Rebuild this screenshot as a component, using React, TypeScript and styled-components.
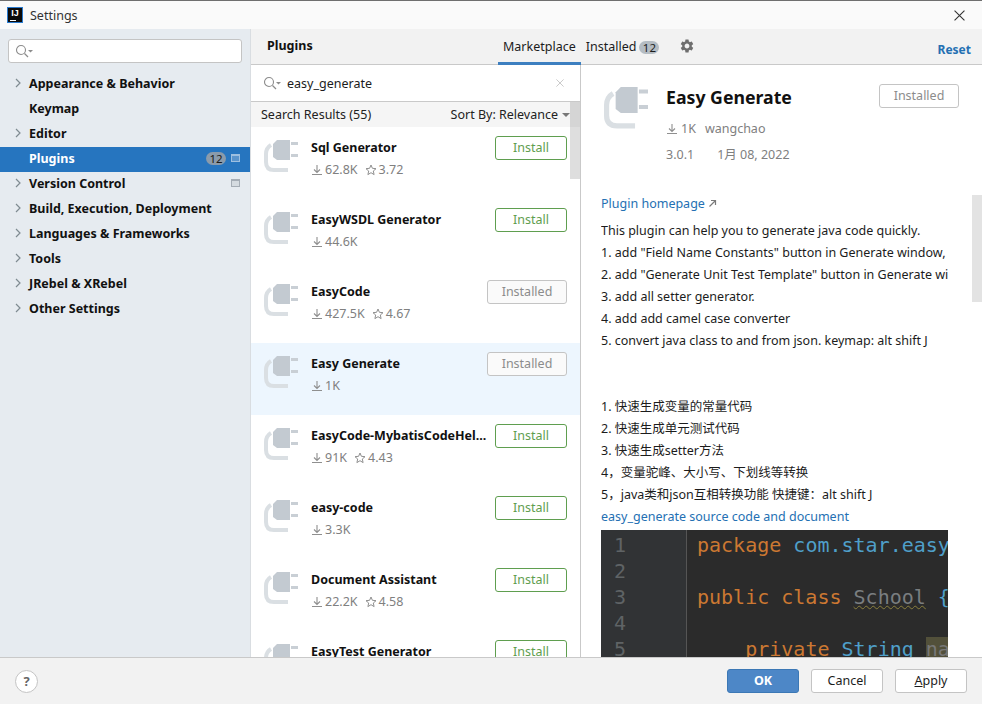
import React from "react";
import styled, { createGlobalStyle } from "styled-components";
import { MdSettings } from "react-icons/md";

const FONT = `"Noto Sans", "Noto Sans CJK SC", "Liberation Sans", sans-serif`;

const plugins = [
  { name: "Sql Generator", downloads: "62.8K", rating: "3.72", installed: false },
  { name: "EasyWSDL Generator", downloads: "44.6K", installed: false },
  { name: "EasyCode", downloads: "427.5K", rating: "4.67", installed: true },
  { name: "Easy Generate", downloads: "1K", installed: true, selected: true },
  { name: "EasyCode-MybatisCodeHel...", downloads: "91K", rating: "4.43", installed: false },
  { name: "easy-code", downloads: "3.3K", installed: false },
  { name: "Document Assistant", downloads: "22.2K", rating: "4.58", installed: false },
  { name: "EasyTest Generator", downloads: "", installed: false },
];

const tree = [
  { label: "Appearance & Behavior", arrow: true },
  { label: "Keymap" },
  { label: "Editor", arrow: true },
  { label: "Plugins", selected: true, badge: "12", square: true },
  { label: "Version Control", arrow: true, square: true },
  { label: "Build, Execution, Deployment", arrow: true },
  { label: "Languages & Frameworks", arrow: true },
  { label: "Tools", arrow: true },
  { label: "JRebel & XRebel", arrow: true },
  { label: "Other Settings", arrow: true },
];

function PlugIcon({ size = 34 }: { size?: number }) {
  return (
    <svg width={size} height={size} viewBox="0 0 34 34" fill="none">
      <path d="M7 5Q2 8 2 14V22Q2 30 10 30H24" stroke="#dadfe3" strokeWidth="4" />
      <path d="M13 0H26V20H13L9 17V4Z" fill="#c3cad1" />
      <path d="M27 2H34V5H27ZM27 14H34V17H27Z" fill="#c9cfd5" />
    </svg>
  );
}

function SearchIcon() {
  return (
    <svg width="19" height="14" viewBox="0 0 19 14" fill="none">
      <circle cx="6" cy="6" r="4.5" stroke="#8c8c8c" strokeWidth="1.1" />
      <path d="M9.5 9.5L13 13" stroke="#8c8c8c" strokeWidth="1.3" />
      <path d="M13 6H18L15.5 8.5Z" fill="#8c8c8c" />
    </svg>
  );
}

function DownloadIcon() {
  return (
    <svg width="12" height="12" viewBox="0 0 12 12" fill="none">
      <path d="M6 1V8M3 5.5L6 8.5L9 5.5M1 10.5H11" stroke="#8f8f8f" strokeWidth="1.1" />
    </svg>
  );
}

function StarIcon() {
  return (
    <svg width="12" height="12" viewBox="0 0 12 12" fill="none">
      <path d="M6 1L7.4 4.3L11 4.7L8.3 7L9.1 10.6L6 8.7L2.9 10.6L3.7 7L1 4.7L4.6 4.3Z" stroke="#8f8f8f" strokeWidth="1" />
    </svg>
  );
}

function Chevron() {
  return (
    <svg width="8" height="10" viewBox="0 0 8 10" fill="none">
      <path d="M2 1L6 5L2 9" stroke="#7f8b91" strokeWidth="1.2" />
    </svg>
  );
}

function CloseIcon({ color, size }: { color: string; size: number }) {
  return (
    <svg width={size} height={size} viewBox="0 0 10 10" fill="none">
      <path d="M0.5 0.5L9.5 9.5M9.5 0.5L0.5 9.5" stroke={color} strokeWidth="1" />
    </svg>
  );
}

export default function App() {
  return (
    <Window>
      <GlobalStyle />
      <TitleBar>
        <AppLogo>
          IJ
          <LogoDash />
        </AppLogo>
        <TitleText>Settings</TitleText>
        <TitleClose>
          <CloseIcon color="#333" size={11} />
        </TitleClose>
      </TitleBar>

      <Body>
        <Sidebar>
          <TreeSearch>
            <SearchIcon />
          </TreeSearch>
          {tree.map((item) => (
            <TreeRow key={item.label} selected={item.selected}>
              <ArrowSlot>{item.arrow && <Chevron />}</ArrowSlot>
              <TreeLabel>{item.label}</TreeLabel>
              {item.badge && <TreeBadge>{item.badge}</TreeBadge>}
              {item.square && <ProjectMark selected={item.selected} />}
            </TreeRow>
          ))}
        </Sidebar>

        <Main>
          <Header>
            <HeaderTitle>Plugins</HeaderTitle>
            <Tab active>Marketplace</Tab>
            <Tab>
              Installed<TabBadge>12</TabBadge>
            </Tab>
            <GearSlot>
              <MdSettings size={16} color="#6e6e6e" />
            </GearSlot>
            <ResetLink>Reset</ResetLink>
          </Header>

          <Columns>
            <ListColumn>
              <ListSearch>
                <SearchIcon />
                <ListSearchText>easy_generate</ListSearchText>
                <CloseIcon color="#bdbdbd" size={8} />
              </ListSearch>
              <ResultsBar>
                <span>Search Results (55)</span>
                <SortBy>
                  Sort By: Relevance
                  <SortCaret />
                </SortBy>
              </ResultsBar>
              <ListScroll>
                {plugins.map((p) => (
                  <PluginRow key={p.name} selected={p.selected}>
                    <PlugIcon />
                    <PluginInfo>
                      <PluginName>{p.name}</PluginName>
                      <PluginMeta>
                        <DownloadIcon />
                        <span>{p.downloads}</span>
                        {p.rating && (
                          <RatingGroup>
                            <StarIcon />
                            <span>{p.rating}</span>
                          </RatingGroup>
                        )}
                      </PluginMeta>
                    </PluginInfo>
                    <RowButton installed={p.installed}>{p.installed ? "Installed" : "Install"}</RowButton>
                  </PluginRow>
                ))}
              </ListScroll>
              <ListThumb />
            </ListColumn>

            <DetailColumn>
              <DetailHead>
                <PlugIcon size={44} />
                <DetailInfo>
                  <DetailTitle>Easy Generate</DetailTitle>
                  <DetailMeta top={14}>
                    <DownloadIcon />
                    <span>1K</span>
                    <Vendor>wangchao</Vendor>
                  </DetailMeta>
                  <DetailMeta top={10}>
                    <span>3.0.1</span>
                    <DateText>1月 08, 2022</DateText>
                  </DetailMeta>
                </DetailInfo>
                <InstalledButton>Installed</InstalledButton>
              </DetailHead>

              <Description>
                <HomepageLink>
                  Plugin homepage
                  <svg width="9" height="9" viewBox="0 0 9 9" fill="none">
                    <path d="M1.5 7.5L7.5 1.5M3 1.5H7.5V6" stroke="#7a7a7a" strokeWidth="1.2" />
                  </svg>
                </HomepageLink>
                <TextLine>This plugin can help you to generate java code quickly.</TextLine>
                <TextLine>1. add "Field Name Constants" button in Generate window, can generate</TextLine>
                <TextLine>2. add "Generate Unit Test Template" button in Generate window, can</TextLine>
                <TextLine>3. add all setter generator.</TextLine>
                <TextLine>4. add add camel case converter</TextLine>
                <TextLine>5. convert java class to and from json. keymap: alt shift J</TextLine>
                <Spacer />
                <TextLine>1. 快速生成变量的常量代码</TextLine>
                <TextLine>2. 快速生成单元测试代码</TextLine>
                <TextLine>3. 快速生成setter方法</TextLine>
                <TextLine>4，变量驼峰、大小写、下划线等转换</TextLine>
                <TextLine>5，java类和json互相转换功能 快捷键：alt shift J</TextLine>
                <SourceLink>easy_generate source code and document</SourceLink>
                <CodeShot>
                  <Gutter>
                    <span>1</span>
                    <span>2</span>
                    <span>3</span>
                    <span>4</span>
                    <span>5</span>
                  </Gutter>
                  <CodeLines>
                    <CodeLine>
                      <Keyword>package</Keyword> <Pack>com.star.easy</Pack>
                    </CodeLine>
                    <CodeLine>&nbsp;</CodeLine>
                    <CodeLine>
                      <Keyword>public class</Keyword> <Wavy>School</Wavy> <Pack>{"{"}</Pack>
                    </CodeLine>
                    <CodeLine>&nbsp;</CodeLine>
                    <CodeLine>
                      {"    "}
                      <Keyword>private</Keyword> <Pack>String</Pack> <Marked>na</Marked>
                    </CodeLine>
                  </CodeLines>
                </CodeShot>
              </Description>
              <DetailThumb />
            </DetailColumn>
          </Columns>
        </Main>
      </Body>

      <Footer>
        <HelpButton>?</HelpButton>
        <FooterButton primary>OK</FooterButton>
        <FooterButton>Cancel</FooterButton>
        <FooterButton>
          <u>A</u>pply
        </FooterButton>
      </Footer>
    </Window>
  );
}

const GlobalStyle = createGlobalStyle`
  html, body {
    margin: 0;
    padding: 0;
    overflow: hidden;
  }
  * {
    box-sizing: border-box;
  }
`;

const Window = styled.div`
  width: 982px;
  height: 704px;
  display: flex;
  flex-direction: column;
  background: #f2f2f2;
  border-top: 1px solid #6f6f6f;
  font-family: ${FONT};
  font-size: 12.5px;
  color: #1c1c1c;
  overflow: hidden;
`;

const TitleBar = styled.div`
  height: 28px;
  flex: none;
  display: flex;
  align-items: center;
  padding: 0 17px 0 8px;
  background: #fafafa;
`;

const AppLogo = styled.div`
  position: relative;
  width: 14px;
  height: 14px;
  background: #0b0b0b;
  outline: 1px solid #2a7bd0;
  color: #fff;
  font-family: "Liberation Sans", sans-serif;
  font-size: 9px;
  font-weight: 700;
  line-height: 10px;
  text-align: center;
`;

const LogoDash = styled.div`
  position: absolute;
  left: 2px;
  bottom: 1px;
  width: 6px;
  height: 1px;
  background: #fff;
`;

const TitleText = styled.div`
  margin-left: 8px;
  font-size: 12.5px;
  color: #333;
`;

const TitleClose = styled.div`
  margin-left: auto;
  display: flex;
`;

const Body = styled.div`
  flex: 1;
  min-height: 0;
  display: flex;
`;

const Sidebar = styled.div`
  width: 250px;
  flex: none;
  background: #e6ebf0;
  padding-top: 10px;
`;

const TreeSearch = styled.div`
  height: 24px;
  margin: 0 8px 9px;
  display: flex;
  align-items: center;
  padding-left: 6px;
  background: #fff;
  border: 1px solid #c4c4c4;
  border-radius: 3px;
`;

const TreeRow = styled.div<{ selected?: boolean }>`
  height: 25px;
  display: flex;
  align-items: center;
  padding: 0 10px 3px 0;
  color: ${(p) => (p.selected ? "#fff" : "#111")};
  background: ${(p) => (p.selected ? "#2675bf" : "transparent")};
`;

const ArrowSlot = styled.div`
  width: 29px;
  flex: none;
  display: flex;
  justify-content: flex-end;
  padding-right: 7px;
`;

const TreeLabel = styled.div`
  font-size: 12.5px;
  font-weight: 700;
  white-space: nowrap;
  flex: 1;
`;

const TreeBadge = styled.div`
  width: 20px;
  height: 13px;
  margin-right: 5px;
  border-radius: 7px;
  background: #8a9bab;
  color: #1a1a1a;
  font-size: 11.5px;
  line-height: 13px;
  text-align: center;
`;

const ProjectMark = styled.div<{ selected?: boolean }>`
  width: 9px;
  height: 8px;
  border: 1px solid ${(p) => (p.selected ? "#9dbfe0" : "#a5adb5")};
  border-top-width: 2px;
  background: ${(p) => (p.selected ? "#5a94cc" : "#d5dbe0")};
`;

const Main = styled.div`
  flex: 1;
  min-width: 0;
  display: flex;
  flex-direction: column;
  border-left: 1px solid #d9dde1;
`;

const Header = styled.div`
  height: 36px;
  flex: none;
  display: flex;
  align-items: stretch;
  padding-left: 16px;
  background: #f2f2f2;
  border-bottom: 1px solid #c9c9c9;
`;

const HeaderTitle = styled.div`
  width: 231px;
  flex: none;
  padding-top: 8px;
  font-size: 12.5px;
  font-weight: 700;
  color: #111;
`;

const Tab = styled.div<{ active?: boolean }>`
  display: flex;
  align-items: flex-start;
  padding: 10px 5px 0;
  font-size: 12.5px;
  line-height: 16px;
  color: #1c1c1c;
  margin-bottom: -1px;
  border-bottom: 3px solid ${(p) => (p.active ? "#3d7fc0" : "transparent")};
`;

const TabBadge = styled.span`
  width: 20px;
  height: 13px;
  margin: 2px 0 0 3px;
  border-radius: 7px;
  background: #b4bcc3;
  font-size: 11.5px;
  line-height: 13px;
  text-align: center;
`;

const GearSlot = styled.div`
  margin-left: 15px;
  padding-top: 9px;
`;

const ResetLink = styled.div`
  margin-left: auto;
  padding: 12px 11px 0 0;
  font-size: 12px;
  font-weight: 700;
  color: #2470b3;
`;

const Columns = styled.div`
  flex: 1;
  min-height: 0;
  display: flex;
`;

const ListColumn = styled.div`
  position: relative;
  width: 330px;
  flex: none;
  display: flex;
  flex-direction: column;
  background: #fff;
  border-right: 1px solid #c9c9c9;
  overflow: hidden;
`;

const ListSearch = styled.div`
  height: 37px;
  flex: none;
  display: flex;
  align-items: center;
  padding: 0 16px 0 12px;
  border-bottom: 1px solid #c9c9c9;
`;

const ListSearchText = styled.div`
  flex: 1;
  margin-left: 5px;
  font-size: 12.5px;
  color: #1c1c1c;
`;

const ResultsBar = styled.div`
  height: 25px;
  flex: none;
  display: flex;
  align-items: center;
  justify-content: space-between;
  padding: 0 10px 0 10px;
  background: #f5f5f5;
  font-size: 12.5px;
  color: #222;
`;

const SortBy = styled.div`
  display: flex;
  align-items: center;
`;

const SortCaret = styled.div`
  width: 0;
  height: 0;
  margin-left: 4px;
  border-left: 4px solid transparent;
  border-right: 4px solid transparent;
  border-top: 4px solid #777;
`;

const ListScroll = styled.div`
  flex: 1;
  min-height: 0;
  overflow: hidden;
`;

const PluginRow = styled.div<{ selected?: boolean }>`
  height: 72px;
  display: flex;
  align-items: flex-start;
  padding: 13px 13px 0 13px;
  background: ${(p) => (p.selected ? "#edf6fe" : "transparent")};
`;

const PluginInfo = styled.div`
  flex: 1;
  min-width: 0;
  margin-left: 13px;
`;

const PluginName = styled.div`
  font-size: 12.5px;
  font-weight: 700;
  line-height: 16px;
  color: #111;
  white-space: nowrap;
`;

const PluginMeta = styled.div`
  display: flex;
  align-items: center;
  gap: 2px;
  margin-top: 6px;
  font-size: 12.5px;
  line-height: 16px;
  color: #808080;
`;

const RatingGroup = styled.span`
  display: inline-flex;
  align-items: center;
  gap: 2px;
  margin-left: 5px;
`;

const RowButton = styled.div<{ installed?: boolean }>`
  width: ${(p) => (p.installed ? "80px" : "72px")};
  height: 24px;
  flex: none;
  margin-top: -4px;
  border: 1px solid ${(p) => (p.installed ? "#c4c4c4" : "#5f9e4f")};
  border-radius: 3px;
  background: ${(p) => (p.installed ? "#fafafa" : "#fff")};
  color: ${(p) => (p.installed ? "#8c8c8c" : "#5f9e4f")};
  font-size: 12.5px;
  line-height: 22px;
  text-align: center;
`;

const ListThumb = styled.div`
  position: absolute;
  top: 37px;
  right: 0;
  width: 10px;
  height: 77px;
  background: rgba(0, 0, 0, 0.13);
`;

const DetailColumn = styled.div`
  position: relative;
  flex: 1;
  min-width: 0;
  background: #fff;
  padding-left: 20px;
  overflow: hidden;
`;

const DetailHead = styled.div`
  height: 130px;
  display: flex;
  align-items: flex-start;
  padding: 22px 23px 0 3px;
`;

const DetailInfo = styled.div`
  flex: 1;
  margin-left: 18px;
`;

const DetailTitle = styled.div`
  font-size: 17.7px;
  font-weight: 700;
  line-height: 20px;
  color: #111;
`;

const DetailMeta = styled.div<{ top: number }>`
  display: flex;
  align-items: center;
  gap: 3px;
  margin-top: ${(p) => p.top}px;
  font-size: 12.5px;
  line-height: 16px;
  color: #808080;
`;

const Vendor = styled.span`
  margin-left: 6px;
`;

const DateText = styled.span`
  margin-left: 20px;
`;

const InstalledButton = styled.div`
  width: 80px;
  height: 24px;
  flex: none;
  margin-top: -3px;
  border: 1px solid #c4c4c4;
  border-radius: 3px;
  background: #fff;
  color: #8c8c8c;
  font-size: 12.5px;
  line-height: 22px;
  text-align: center;
`;

const Description = styled.div`
  width: 347px;
  font-size: 12.5px;
  color: #1c1c1c;
  overflow: hidden;
`;

const HomepageLink = styled.div`
  display: flex;
  align-items: center;
  gap: 3px;
  height: 17px;
  margin-bottom: 8px;
  color: #2470b3;
`;

const TextLine = styled.div`
  height: 22px;
  line-height: 22px;
  white-space: nowrap;
`;

const Spacer = styled.div`
  height: 44px;
`;

const SourceLink = styled(TextLine)`
  color: #2470b3;
`;

const CodeShot = styled.div`
  height: 127px;
  margin-top: 2px;
  display: flex;
  background: #2b2b2b;
  font-family: "DejaVu Sans Mono", "Liberation Mono", monospace;
  font-size: 20px;
  line-height: 26px;
  overflow: hidden;
`;

const Gutter = styled.div`
  width: 86px;
  flex: none;
  display: flex;
  flex-direction: column;
  padding: 2px 0 0 13px;
  background: #313335;
  border-right: 1px solid #555;
  color: #5f6365;
`;

const CodeLines = styled.div`
  padding: 2px 0 0 10px;
  white-space: pre;
  color: #a9b7c6;
`;

const CodeLine = styled.div`
  height: 26px;
`;

const Keyword = styled.span`
  color: #cc7832;
`;

const Pack = styled.span`
  color: #4f9fc9;
`;

const Wavy = styled.span`
  color: #7a7e80;
  text-decoration: underline wavy #8a7f3d 1px;
`;

const Marked = styled.span`
  color: #777;
  background: #52503a;
`;

const DetailThumb = styled.div`
  position: absolute;
  top: 130px;
  right: 0;
  width: 10px;
  height: 107px;
  background: rgba(0, 0, 0, 0.11);
`;

const Footer = styled.div`
  height: 47px;
  flex: none;
  display: flex;
  align-items: center;
  gap: 12px;
  padding: 0 15px;
  background: #f2f2f2;
  border-top: 1px solid #c9c9c9;
`;

const HelpButton = styled.div`
  width: 23px;
  height: 23px;
  margin-right: auto;
  border: 1px solid #c4c4c4;
  border-radius: 50%;
  background: #fff;
  color: #666;
  font-size: 13px;
  font-weight: 700;
  line-height: 21px;
  text-align: center;
`;

const FooterButton = styled.div<{ primary?: boolean }>`
  width: 72px;
  height: 24px;
  border: 1px solid ${(p) => (p.primary ? "#3c78b5" : "#c4c4c4")};
  border-radius: 3px;
  background: ${(p) => (p.primary ? "#4d87c7" : "#fff")};
  color: ${(p) => (p.primary ? "#fff" : "#1c1c1c")};
  font-size: 12.5px;
  font-weight: ${(p) => (p.primary ? 700 : 400)};
  line-height: 22px;
  text-align: center;
`;
